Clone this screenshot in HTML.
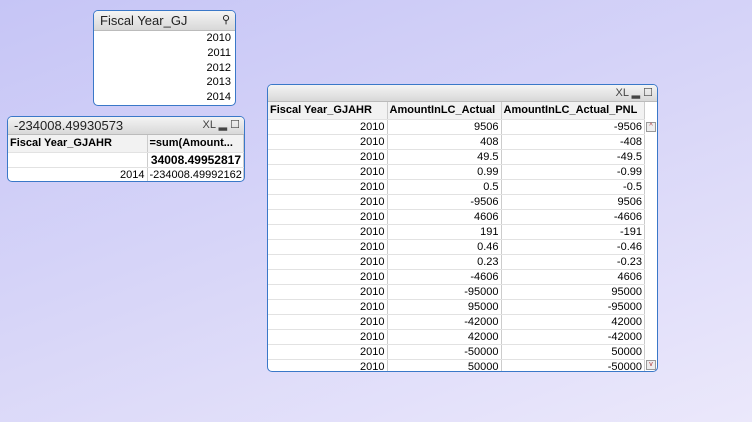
<!DOCTYPE html>
<html><head><style>
*{margin:0;padding:0;box-sizing:border-box}
body{width:752px;height:422px;overflow:hidden;background:linear-gradient(160deg,#c6c5f6 0%,#d8d6f8 50%,#ebe8fb 100%);font-family:"Liberation Sans",sans-serif;font-size:11px;color:#000;position:relative}
.box{position:absolute;background:#fff;border:1px solid #3a78c8;border-radius:5px;overflow:hidden}
.cap{background:linear-gradient(#f4f4f4,#d8d8d8);border-bottom:1px solid #bbb;position:relative}
.r{text-align:right}
table{border-collapse:collapse;width:100%;table-layout:fixed}
td,th{border-right:1px solid #ccc;border-bottom:1px solid #e2e2e2;height:15px;padding:0 2px;white-space:nowrap;overflow:hidden;font-size:11px}
th{font-weight:bold;text-align:left;height:17px;background:#f2f2f2}
.ico{position:absolute;top:3px;font-size:11px;color:#444}
</style></head><body>
<div class="box" style="left:93px;top:10px;width:143px;height:96px">
 <div class="cap" style="height:20px;font-size:13px;padding:2px 6px;color:#222">Fiscal Year_GJ<span style="position:absolute;right:5px;top:2px;font-size:11px">⚲</span></div>
 <div class="r" style="padding:0 4px;line-height:14.8px;font-size:11px">2010<br>2011<br>2012<br>2013<br>2014</div>
</div>
<div class="box" style="left:7px;top:116px;width:238px;height:66px">
 <div class="cap" style="height:18px;font-size:13px;padding:1px 6px;color:#222">-234008.49930573<span class="ico" style="right:4px;top:1px">XL ▂ ☐</span></div>
 <table><colgroup><col style="width:139px"><col></colgroup>
 <tr><th>Fiscal Year_GJAHR</th><th>=sum(Amount...</th></tr>
 <tr><td></td><td class="r" style="font-weight:bold;font-size:12px">34008.49952817</td></tr>
 <tr><td class="r">2014</td><td class="r">-234008.49992162</td></tr></table>
</div>
<div class="box" style="left:267px;top:84px;width:391px;height:288px">
 <div class="cap" style="height:17px"><span class="ico" style="right:4px;top:1px">XL ▂ ☐</span></div>
 <div style="display:flex">
 <table style="width:377px"><colgroup><col style="width:119px"><col style="width:114px"><col></colgroup>
 <tr><th>Fiscal Year_GJAHR</th><th>AmountInLC_Actual</th><th>AmountInLC_Actual_PNL</th></tr>
 <tr><td class="r">2010</td><td class="r">9506</td><td class="r">-9506</td></tr>
 <tr><td class="r">2010</td><td class="r">408</td><td class="r">-408</td></tr>
 <tr><td class="r">2010</td><td class="r">49.5</td><td class="r">-49.5</td></tr>
 <tr><td class="r">2010</td><td class="r">0.99</td><td class="r">-0.99</td></tr>
 <tr><td class="r">2010</td><td class="r">0.5</td><td class="r">-0.5</td></tr>
 <tr><td class="r">2010</td><td class="r">-9506</td><td class="r">9506</td></tr>
 <tr><td class="r">2010</td><td class="r">4606</td><td class="r">-4606</td></tr>
 <tr><td class="r">2010</td><td class="r">191</td><td class="r">-191</td></tr>
 <tr><td class="r">2010</td><td class="r">0.46</td><td class="r">-0.46</td></tr>
 <tr><td class="r">2010</td><td class="r">0.23</td><td class="r">-0.23</td></tr>
 <tr><td class="r">2010</td><td class="r">-4606</td><td class="r">4606</td></tr>
 <tr><td class="r">2010</td><td class="r">-95000</td><td class="r">95000</td></tr>
 <tr><td class="r">2010</td><td class="r">95000</td><td class="r">-95000</td></tr>
 <tr><td class="r">2010</td><td class="r">-42000</td><td class="r">42000</td></tr>
 <tr><td class="r">2010</td><td class="r">42000</td><td class="r">-42000</td></tr>
 <tr><td class="r">2010</td><td class="r">-50000</td><td class="r">50000</td></tr>
 <tr><td class="r">2010</td><td class="r">50000</td><td class="r">-50000</td></tr>
 </table>
 <div style="width:12px;position:relative;height:270px">
  <div style="position:absolute;top:20px;left:1px;width:10px;height:10px;border:1px solid #999;background:#eee;font-size:7px;text-align:center;line-height:8px;color:#a33">^</div>
  <div style="position:absolute;top:258px;left:1px;width:10px;height:10px;border:1px solid #999;background:#eee;font-size:7px;text-align:center;line-height:8px;color:#a33">v</div>
 </div></div>
</div>
</body></html>
